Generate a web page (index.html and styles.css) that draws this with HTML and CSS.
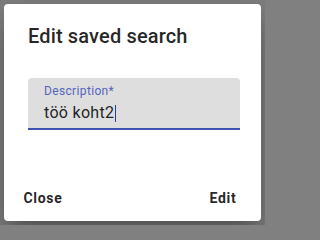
FILE: index.html
```html
<!DOCTYPE html>
<html lang="et">
<head>
<meta charset="utf-8">
<title>Edit saved search</title>
<link rel="stylesheet" href="styles.css">
</head>
<body>
<div class="dialog" role="dialog" aria-labelledby="dlg-title">
  <h2 class="dialog-title" id="dlg-title">Edit saved search</h2>
  <div class="dialog-content">
    <div class="field">
      <label class="field-label">Description*</label>
      <div class="field-input">töö koht2<span class="caret"></span></div>
    </div>
  </div>
  <div class="dialog-actions">
    <button class="btn">Close</button>
    <button class="btn">Edit</button>
  </div>
</div>
</body>
</html>
```
FILE: styles.css
```css
html, body {
  margin: 0;
  padding: 0;
}
html {
  background: #808080;
}
body {
  width: 265px;
  height: 225px;
  background: #808080;
  padding: 4px;
  box-sizing: border-box;
  font-family: Roboto, "Liberation Sans", sans-serif;
  color: rgba(0, 0, 0, 0.87);
}
.dialog {
  width: 257px;
  height: 217px;
  background: #fff;
  border-radius: 4px;
  box-shadow: 0 11px 15px -7px rgba(0,0,0,0.2), 0 24px 38px 3px rgba(0,0,0,0.14), 0 9px 46px 8px rgba(0,0,0,0.12);
  display: flex;
  flex-direction: column;
  box-sizing: border-box;
}
.dialog-title {
  margin: 0;
  padding: 16px 24px;
  font-size: 20px;
  font-weight: 500;
  line-height: 32px;
  letter-spacing: 0.15px;
  color: rgba(0, 0, 0, 0.87);
}
.dialog-content {
  flex: 1;
  padding: 10px 21px 0 24px;
}
.field {
  background: #dedede;
  border-radius: 4px 4px 0 0;
  border-bottom: 2px solid #3f51b5;
  padding: 7px 16px 4px;
}
.field-label {
  display: block;
  font-size: 12px;
  line-height: 12px;
  color: #5563c1;
  letter-spacing: 0.35px;
}
.field-input {
  margin-top: 4px;
  font-size: 16px;
  line-height: 23px;
  color: rgba(0, 0, 0, 0.87);
  letter-spacing: 0.3px;
}
.caret {
  display: inline-block;
  width: 1px;
  height: 17px;
  background: #2a3a9a;
  vertical-align: -4px;
  margin-left: 1px;
}
.dialog-actions {
  display: flex;
  justify-content: space-between;
  padding: 8px 6px 5px 7px;
}
.btn {
  min-width: 64px;
  padding: 6px 8px;
  border: 0;
  background: transparent;
  font-family: Roboto, "Liberation Sans", sans-serif;
  font-size: 14px;
  font-weight: 700;
  line-height: 24.5px;
  letter-spacing: 0.7px;
  color: rgba(0, 0, 0, 0.87);
  border-radius: 4px;
}
```
